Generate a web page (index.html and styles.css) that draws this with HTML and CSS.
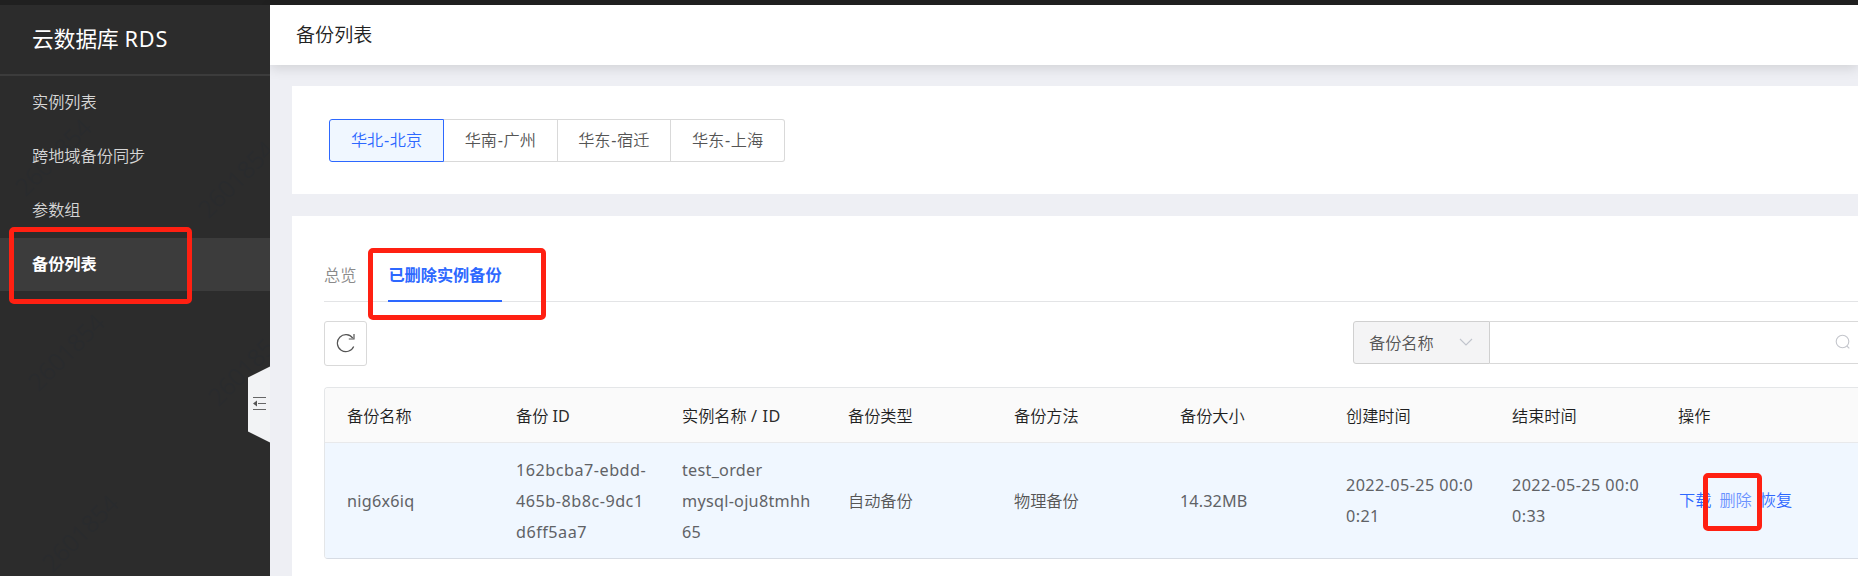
FILE: index.html
```html
<!DOCTYPE html>
<html lang="zh-CN">
<head>
<meta charset="utf-8">
<title>备份列表</title>
<link rel="stylesheet" href="styles.css">
</head>
<body>
<div class="topbar"></div>
<div class="shell">
  <aside class="sidebar">
    <div class="watermarks" aria-hidden="true">
      <span class="wm wm-a">2601854</span>
      <span class="wm wm-b">2601854</span>
      <span class="wm wm-c">2601854</span>
      <span class="wm wm-d">2601854</span>
      <span class="wm wm-e">2601854</span>
    </div>
    <h1 class="product">云数据库 <span class="product-en">RDS</span></h1>
    <nav class="menu">
      <a class="menu-item">实例列表</a>
      <a class="menu-item">跨地域备份同步</a>
      <a class="menu-item">参数组</a>
      <a class="menu-item active">备份列表</a>
    </nav>
    <svg class="collapse" width="22" height="78" viewBox="0 0 22 78">
      <path d="M0 11.500 22 .5v76L0 65.500z" fill="#f2f3f5"/>
      <path d="M5 31.500h13M10 37.500h8M5 43.500h13" stroke="#666" stroke-width="1" fill="none"/>
      <path d="M5 37.500 9 34.500v6z" fill="#555"/>
    </svg>
  </aside>
  <main class="main">
    <header class="header">备份列表</header>
    <section class="card regions">
      <div class="region-group">
        <button class="region selected">华北<span class="dash">-</span>北京</button>
        <button class="region">华南<span class="dash">-</span>广州</button>
        <button class="region">华东<span class="dash">-</span>宿迁</button>
        <button class="region">华东<span class="dash">-</span>上海</button>
      </div>
    </section>
    <section class="card list">
      <div class="tabs">
        <a class="tab">总览</a>
        <a class="tab current">已删除实例备份</a>
      </div>
      <div class="toolbar">
        <button class="refresh">
          <svg width="20" height="20" viewBox="0 0 20 20" fill="none" stroke="#555" stroke-width="1.2">
            <path d="M17.700 13.500A8.500 8.500 0 1 1 16.800 5.200"/>
            <path d="M18 1v5h-5.200"/>
          </svg>
        </button>
        <div class="search">
          <div class="select"><span>备份名称</span>
            <svg width="14" height="9" viewBox="0 0 14 9" fill="none" stroke="#c0c4cc" stroke-width="1.1"><path d="M1 1l6 6 6-6"/></svg>
          </div>
          <div class="field">
            <svg width="16" height="16" viewBox="0 0 16 16" fill="none" stroke="#c4c6cc" stroke-width="1.1"><circle cx="7.500" cy="7.500" r="6.300"/><path d="M11.800 12l2.500 2.300"/></svg>
          </div>
        </div>
      </div>
      <div class="table">
        <div class="row head">
          <div>备份名称</div><div>备份 <span class="latin">ID</span></div><div>实例名称 <span class="latin label">/ ID</span></div><div>备份类型</div><div>备份方法</div><div>备份大小</div><div>创建时间</div><div>结束时间</div><div>操作</div>
        </div>
        <div class="row body">
          <div class="latin name">nig6x6iq</div>
          <div class="latin backup-id">162bcba7-ebdd-<br>465b-8b8c-9dc1<br>d6ff5aa7</div>
          <div class="latin instance">test_order<br>mysql-oju8tmhh<br>65</div>
          <div>自动备份</div>
          <div>物理备份</div>
          <div class="latin size">14.32MB</div>
          <div class="latin time">2022-05-25 00:0<br>0:21</div>
          <div class="latin time">2022-05-25 00:0<br>0:33</div>
          <div class="actions"><a>下载</a><a class="hover">删除</a><a>恢复</a></div>
        </div>
      </div>
    </section>
  </main>
</div>
<div class="mark mark-menu"></div>
<div class="mark mark-tab"></div>
<div class="mark mark-delete"></div>
</body>
</html>
```
FILE: styles.css
```css
* { box-sizing: border-box; }
body {
  margin: 0;
  width: 1858px;
  height: 576px;
  overflow: hidden;
  position: relative;
  background: #eeeff4;
  color: #555;
  font: 350 16.2px/31px "Noto Sans", "Noto Sans CJK SC", sans-serif;
}
button { font: inherit; color: inherit; background: #fff; padding: 0; margin: 0; }
svg { display: block; flex: none; }
.topbar { height: 5px; background: #202020; }
.shell { display: flex; height: 571px; }

.sidebar { position: relative; flex: none; width: 270px; background: #2c2c2c; overflow: hidden; }
.product {
  position: relative;
  margin: 0;
  height: 71px;
  padding: 0 32px;
  border-bottom: 2px solid #3c3c3c;
  color: #fff;
  font-size: 21.7px;
  font-weight: 400;
  line-height: 68px;
  white-space: nowrap;
}
.product-en { letter-spacing: .9px; }
.menu { position: relative; }
.menu-item { display: block; height: 54px; padding-left: 32px; line-height: 52px; color: #d6d6d6; }
.menu-item.active { height: 53px; background: #3c3c3c; color: #fff; font-weight: 700; }
.collapse { position: absolute; right: 0; top: 361px; }
.wm { position: absolute; font-size: 24px; line-height: 24px; color: #292b2e; transform: rotate(-45deg); }
.wm-a { left: 5px; top: 140px; }
.wm-b { left: 188px; top: 162px; }
.wm-c { left: 18px; top: 335px; }
.wm-d { left: 198px; top: 350px; }
.wm-e { left: 32px; top: 516px; }

.main { flex: 1; min-width: 0; display: flex; flex-direction: column; }
.header {
  height: 60px;
  flex: none;
  padding-left: 26px;
  background: #fff;
  box-shadow: 0 3px 12px rgba(0, 0, 0, .13);
  color: #222;
  font-size: 19.1px;
  line-height: 61px;
}
.card { margin-left: 22px; background: #fff; }
.regions { flex: none; height: 108px; margin-top: 21px; padding: 33px 37px; }
.region-group { display: flex; height: 43px; }
.region { width: 114px; border: 1px solid #d9d9d9; border-left: 0; }
.region:nth-child(2), .region:nth-child(3) { width: 113.500px; }
.region.selected { width: 115px; border: 1px solid #2d68ff; background: #f0f7ff; color: #2d68ff; border-radius: 3px 0 0 3px; }
.region:last-child { border-radius: 0 3px 3px 0; }
.dash { padding: 0 .6px; font-weight: 400; }

.list { flex: 1; margin-top: 22px; padding: 34px 0 0 32px; }
.tabs { display: flex; gap: 32px; height: 52px; border-bottom: 1px solid #e3e4e6; }
.tab { height: 52px; line-height: 50px; color: #8a8a8a; }
.tab.current { border-bottom: 2px solid #2d68ff; color: #2d68ff; font-weight: 700; }
.toolbar { display: flex; justify-content: space-between; margin-top: 19px; }
.refresh { display: flex; align-items: center; justify-content: center; width: 43px; height: 45px; padding: 0 0 1px 1px; border: 1px solid #d9d9d9; border-radius: 3px; }
.search { display: flex; width: 505px; height: 43px; }
.select { display: flex; align-items: center; justify-content: space-between; width: 137px; padding: 2px 16px 0 15px; border: 1px solid #d0d0d0; border-radius: 3px 0 0 3px; background: #f4f4f5; }
.select svg { margin-top: -2px; }
.field { flex: 1; display: flex; align-items: center; justify-content: flex-end; padding: 0 7px 1px 0; border: solid #d9d9d9; border-width: 1px 0; }

.table { margin-top: 21px; border: solid #e4e6e8; border-width: 1px 0 1px 1px; border-bottom-color: #d7dce4; border-radius: 4px 0 0 4px; overflow: hidden; }
.row { display: grid; grid-template-columns: 169px repeat(8, 166px); align-items: center; padding-left: 22px; white-space: nowrap; }
.head { height: 55px; padding-top: 2px; border-bottom: 1px solid #e8e9eb; background: #fafafa; color: #1f1f1f; }
.body { height: 115px; padding-top: 1px; background: #f0f7ff; }
.latin { font-weight: 400; }
.row .latin { color: #606266; }
.head .latin { color: #2c2c2c; }
.label { letter-spacing: .6px; }
.name { letter-spacing: .25px; }
.backup-id { letter-spacing: .5px; }
.instance { letter-spacing: .27px; }
.size { letter-spacing: .1px; }
.time { letter-spacing: .42px; }
.actions { display: flex; gap: 8px; padding-left: 1px; margin-top: -1px; color: #2d68ff; }
.actions .hover { color: #6a92ff; }

.mark { position: absolute; border: 5px solid #ff2012; border-radius: 5px; }
.mark-menu { left: 9px; top: 227px; width: 183px; height: 77px; }
.mark-tab { left: 368px; top: 248px; width: 178px; height: 72px; }
.mark-delete { left: 1703px; top: 473px; width: 59px; height: 58px; }
```
